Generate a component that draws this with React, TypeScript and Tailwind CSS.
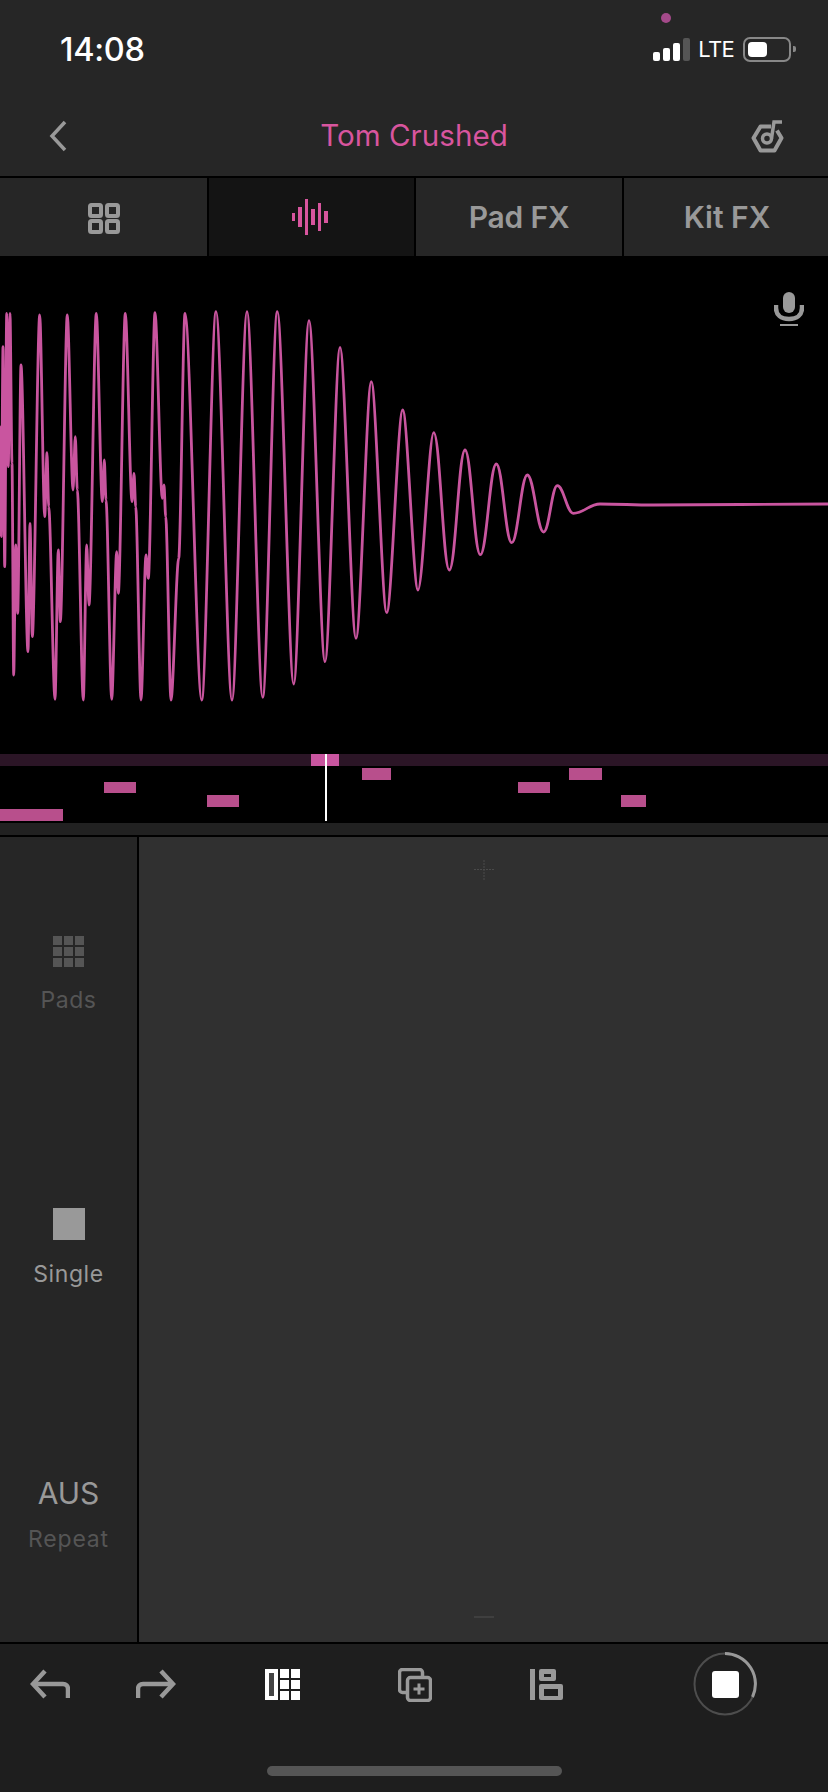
const font = "font-['Inter','Liberation_Sans',sans-serif]";

// Extremes of the wave, read off in 3x crops of the picture
const leftPts: [number, number][] = [
  [0, 660], [1, 800], [3, 500], [4, 830], [9, 260], [14, 920], [20, 160], [25, 620], [30, 160], [36, 610],
  [41, 1245], [47, 855], [53, 1060], [63, 315], [84, 1175], [90, 790], [97, 1130], [119, 165], [134, 770],
  [141, 578], [146, 740], [165, 1318], [175, 870], [181, 1085], [202, 165], [219, 690], [226, 530], [232, 690],
  [250, 1320], [260, 855], [267, 1035], [289, 160], [307, 725], [313, 600], [318, 720], [335, 1318], [350, 875],
  [355, 1000], [376, 160], [396, 725], [402, 640], [407, 740], [423, 1320], [438, 885], [445, 955], [465, 158],
  [487, 715], [492, 675], [497, 770], [513, 1320], [536, 895], [555, 160], [605, 1320], [648, 155], [696, 1320],
  [741, 155], [788, 1312], [832, 155],
];
const rightPts: [number, number][] = [
  [41, 1272], [87, 182], [135, 1205], [180, 262], [228, 1135], [274, 365], [320, 1058], [368, 450], [414, 990],
  [461, 518], [508, 930], [555, 570], [601, 884], [649, 612], [695, 848], [742, 645], [791, 816], [832, 677],
  [880, 760], [960, 732], [1120, 735], [1644, 732],
];

function wavePath() {
  const pts = [
    ...leftPts.map(([x, y]) => [x / 3, y / 3 + 4] as const),
    ...rightPts.map(([x, y]) => [x / 3 + 280, y / 3 + 4] as const),
  ];
  let d = `M${pts[0][0]} ${pts[0][1]}`;
  for (let i = 1; i < pts.length; i++) {
    const [x0, y0] = pts[i - 1];
    const [x1, y1] = pts[i];
    // the tail swings are rounder than the crushed start
    const dx = (x1 - x0) * (x0 > 430 ? 0.4 : 0.3);
    d += `C${(x0 + dx).toFixed(1)} ${y0.toFixed(1)} ${(x1 - dx).toFixed(1)} ${y1.toFixed(1)} ${x1.toFixed(1)} ${y1.toFixed(1)}`;
  }
  return d;
}

const noteRows = [
  ["left-[362px] w-[29px]", "left-[569px] w-[33px]"],
  ["left-[104px] w-[32px]", "left-[518px] w-[32px]"],
  ["left-[207px] w-[32px]", "left-[621px] w-[25px]"],
  ["left-0 w-[63px]"],
];
const rowHeights = ["h-[12px] mt-[2px]", "h-[11px] mt-[2px]", "h-[12px] mt-[2px]", "h-[12px] mt-[2px]"];

function Mic() {
  return (
    <svg width="30" height="36" viewBox="0 0 30 36" fill="none" className="absolute right-[24px] top-[35px]">
      <rect x="9" y="1" width="12" height="21" rx="6" fill="#999" />
      <path d="M2 14V17C2 24 7 28 15 28C23 28 28 24 28 17V14" stroke="#999" strokeWidth="4.500" />
      <rect x="6" y="33" width="18" height="2" fill="#999" />
    </svg>
  );
}

function KitIcon() {
  return (
    <svg width="34" height="34" viewBox="0 0 34 34" fill="none" stroke="#999" strokeWidth="4">
      <path d="M20 6.500H9.500L2.500 18L9.500 30.500H23.500L30.500 18L26 10.500" strokeLinejoin="round" />
      <circle cx="16" cy="18.500" r="4.500" strokeWidth="3.500" />
      <path d="M20.500 18.500L23 2H31" strokeWidth="3.500" />
    </svg>
  );
}

function Undo({ flip }: { flip?: boolean }) {
  return (
    <svg width="40" height="30" viewBox="0 0 40 30" fill="none" stroke="#999" strokeWidth="4.500" className={flip ? "-scale-x-100" : ""}>
      <path d="M15 2L3 15L15 28" strokeLinejoin="miter" />
      <path d="M3 15H33C36 15 38 17 38 20V29" />
    </svg>
  );
}

export default function App() {
  return (
    <div className={`w-[828px] h-[1792px] flex flex-col overflow-hidden bg-black ${font}`}>
      {/* Status bar + nav */}
      <div className="relative h-[176px] bg-[#262626]">
        <div className="absolute left-[661px] top-[13px] w-[10px] h-[10px] rounded-full bg-[#a44a8a]" />
        <div className="h-[98px] flex items-center justify-between pl-[60px] pr-[32px]">
          <span className="mt-[2px] text-[32.500px] font-medium text-white tracking-[-0.3px]">14:08</span>
          <div className="flex items-center">
            <div className="flex items-end gap-[3px] h-[23px]">
              <div className="w-[7px] h-[9px] rounded-[2px] bg-white" />
              <div className="w-[7px] h-[13px] rounded-[2px] bg-white" />
              <div className="w-[7px] h-[18px] rounded-[2px] bg-white" />
              <div className="w-[7px] h-[23px] rounded-[2px] bg-[#555]" />
            </div>
            <span className="ml-[8px] text-[22px] tracking-[-0.7px] text-white leading-none">LTE</span>
            <div className="ml-[9px] w-[48px] h-[25px] rounded-[7px] border-2 border-[#888] p-[3px]">
              <div className="w-[19px] h-full rounded-[4px] bg-white" />
            </div>
            <div className="ml-[2px] w-[3px] h-[6px] rounded-r-[2px] bg-[#888]" />
          </div>
        </div>
        <div className="h-[78px] flex items-center">
          <div className="w-[84px] pl-[48px] pb-[2px]">
            <svg width="20" height="32" viewBox="0 0 20 32" fill="none" stroke="#999" strokeWidth="3.500">
              <path d="M17 2L4 16L17 30" />
            </svg>
          </div>
          <div className="flex-1 pb-[2px] text-center text-[29.600px] text-[#d8559e] leading-none">Tom Crushed</div>
          <div className="w-[84px] pl-[7px]">
            <KitIcon />
          </div>
        </div>
      </div>

      {/* Tabs */}
      <div className="mt-[2px] h-[78px] grid grid-cols-[207px_205px_206px_206px] gap-[2px]">
        <div className="bg-[#262626] flex items-center justify-center pt-[3px]">
          <svg width="32" height="32" viewBox="0 0 32 32" fill="none" stroke="#999" strokeWidth="4">
            <rect x="2" y="2" width="11" height="11" rx="1.500" />
            <rect x="19" y="2" width="11" height="11" rx="1.500" />
            <rect x="2" y="18" width="11" height="11" rx="1.500" />
            <rect x="19" y="18" width="11" height="11" rx="1.500" />
          </svg>
        </div>
        <div className="bg-[#141414] flex items-center justify-center pr-[3px]">
          <svg width="38" height="38" viewBox="0 0 38 38" fill="#d8559e">
            <rect x="1" y="15" width="3" height="8" />
            <rect x="7" y="9" width="4" height="20" />
            <rect x="14" y="1" width="3" height="36" />
            <rect x="20" y="11" width="4" height="16" />
            <rect x="27" y="5" width="3" height="28" />
            <rect x="33" y="13" width="4" height="12" />
          </svg>
        </div>
        <div className="bg-[#262626] flex items-center justify-center text-[30px] font-semibold tracking-[-0.2px] text-[#999]">Pad FX</div>
        <div className="bg-[#262626] flex items-center justify-center text-[30px] font-semibold text-[#999]">Kit FX</div>
      </div>

      {/* Wave form */}
      <div className="relative h-[498px] bg-black">
        <svg width="828" height="498" viewBox="0 0 828 498" fill="none" className="block">
          <path d={wavePath()} stroke="#c9559f" strokeWidth="2.800" strokeLinejoin="round" />
        </svg>
        <Mic />
      </div>

      {/* Note lanes */}
      <div className="relative h-[69px] bg-black">
        <div className="relative h-[12px] bg-[#2b1526]">
          <div className="absolute left-[311px] w-[28px] h-full bg-[#c9559f]" />
        </div>
        {noteRows.map((row, i) => (
          <div key={i} className={`relative ${rowHeights[i]}`}>
            {row.map((cls) => (
              <div key={cls} className={`absolute top-0 h-full bg-[#b84f8c] ${cls}`} />
            ))}
          </div>
        ))}
        <div className="absolute left-[325px] top-0 w-[2px] h-[67px] bg-white" />
      </div>

      <div className="h-[12px] bg-[#212121]" />

      {/* Main panel */}
      <div className="mt-[2px] h-[805px] flex">
        <div className="w-[137px] bg-[#262626] flex flex-col items-center pt-[99px]">
          <div className="grid grid-cols-3 gap-[2px] w-[32px]">
            {Array.from({ length: 9 }).map((_, i) => (
              <div key={i} className="h-[9px] bg-[#555]" />
            ))}
          </div>
          <div className="mt-[19px] text-[23px] leading-[28px] tracking-[0.6px] text-[#555]">Pads</div>
          <div className="mt-[194px] w-[32px] h-[32px] bg-[#999]" />
          <div className="mt-[20px] text-[23px] leading-[28px] tracking-[0.6px] text-[#999]">Single</div>
          <div className="mt-[187px] text-[30px] leading-[36px] text-[#999]">AUS</div>
          <div className="mt-[14px] text-[23px] leading-[28px] tracking-[0.8px] text-[#555]">Repeat</div>
        </div>
        <div className="ml-[2px] flex-1 bg-[#303030] flex flex-col items-center justify-between pt-[23px] pb-[24px]">
          <svg width="20" height="20" viewBox="0 0 20 20" stroke="#4a4a4a" strokeWidth="1" strokeDasharray="2 1">
            <path d="M10 0V20M0 9.500H20" />
          </svg>
          <div className="w-[20px] h-[2px] bg-[#3f3f3f]" />
        </div>
      </div>

      {/* Bottom bar */}
      <div className="mt-[2px] flex-1 bg-[#1e1e1e] flex flex-col">
        <div className="h-[122px] relative flex items-start">
          <div className="mt-[25px] ml-[30px]"><Undo /></div>
          <div className="mt-[25px] ml-[66px]"><Undo flip /></div>
          <div className="mt-[25px] ml-[89px] flex gap-[2px] w-[35px] h-[31px]">
            <div className="w-[13px] bg-white px-[4px] py-[4px]">
              <div className="w-full h-full bg-[#444]" />
            </div>
            <div className="flex-1 grid grid-cols-2 grid-rows-3 gap-[2px]">
              {Array.from({ length: 6 }).map((_, i) => (
                <div key={i} className="bg-white" />
              ))}
            </div>
          </div>
          <svg width="34" height="34" viewBox="0 0 34 34" fill="none" stroke="#999" strokeWidth="3.500" className="mt-[24px] ml-[98px]">
            <rect x="1.500" y="1.500" width="23" height="23" rx="3" />
            <rect x="9.500" y="9.500" width="23" height="23" rx="3" fill="#1e1e1e" />
            <path d="M21 15.500V26.500M15.500 21H26.500" strokeWidth="3" />
          </svg>
          <svg width="34" height="32" viewBox="0 0 34 32" fill="#999" className="mt-[25px] ml-[98px]">
            <rect x="0" y="0" width="5" height="31" />
            <path fillRule="evenodd" d="M11 0H24a2 2 0 0 1 2 2V10a2 2 0 0 1-2 2H11a2 2 0 0 1-2-2V2a2 2 0 0 1 2-2ZM14 5V8H21V5ZM11 15H31a2 2 0 0 1 2 2V29a2 2 0 0 1-2 2H11a2 2 0 0 1-2-2V17a2 2 0 0 1 2-2ZM14 20V27H28V20Z" />
          </svg>
          <div className="mt-[8px] ml-[129px] relative w-[64px] h-[64px] flex items-center justify-center">
            <svg width="64" height="64" viewBox="0 0 64 64" fill="none" className="absolute inset-0">
              <circle cx="32" cy="32" r="30.500" stroke="#4d4d4d" strokeWidth="2" />
              <path d="M32 1.500A30.500 30.500 0 0 1 59.500 45" stroke="#999" strokeWidth="3" />
            </svg>
            <div className="w-[27px] h-[27px] rounded-[3px] bg-white" />
          </div>
        </div>
        <div className="flex justify-center">
          <div className="w-[295px] h-[10px] rounded-full bg-[#555]" />
        </div>
      </div>
    </div>
  );
}
